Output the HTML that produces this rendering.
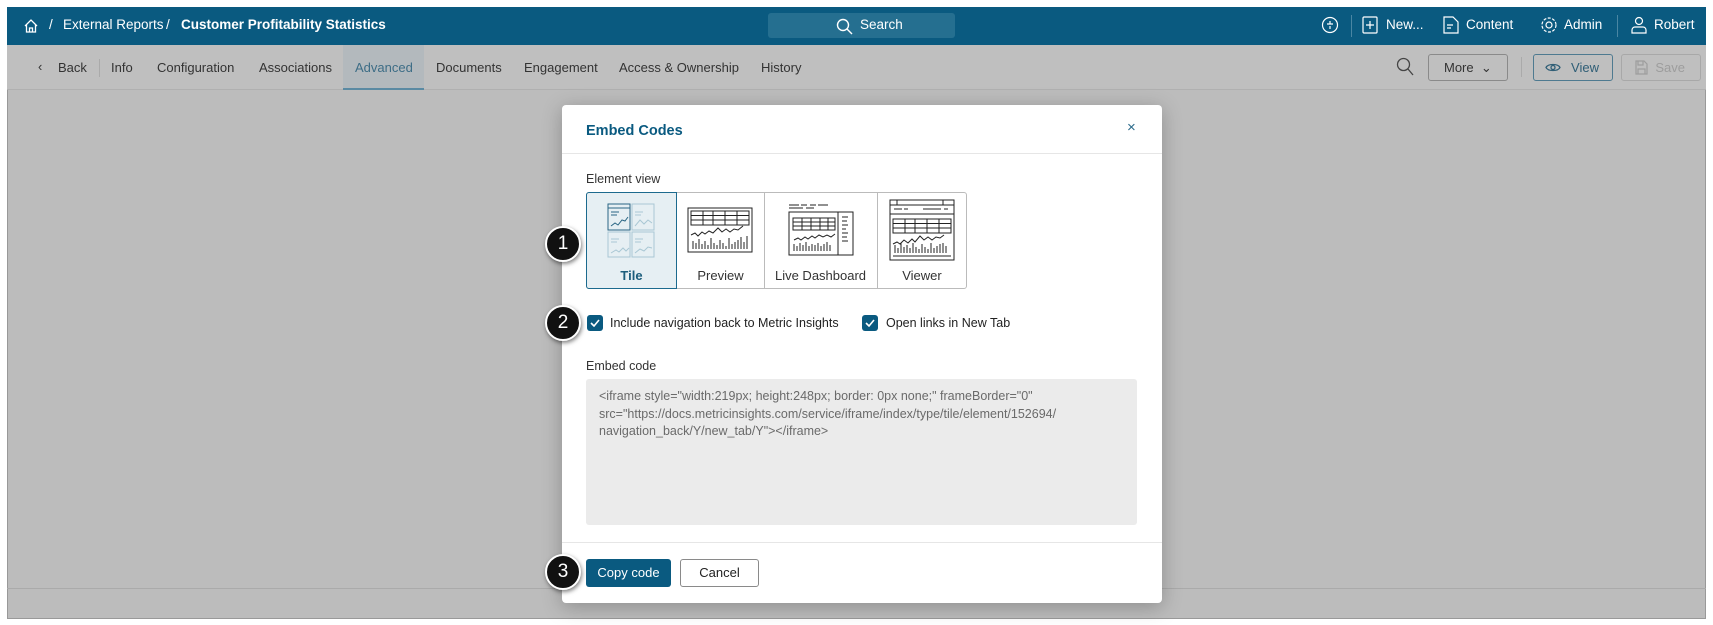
<!DOCTYPE html>
<html><head><meta charset="utf-8"><style>
*{box-sizing:border-box;margin:0;padding:0}
body{width:1713px;height:625px;background:#fff;font-family:"Liberation Sans",sans-serif;position:relative;overflow:hidden}
.abs{position:absolute}
.frame{left:7px;top:7px;width:1699px;height:612px;background:#bcbcbc;border:1px solid #999}
.top{left:7px;top:7px;width:1699px;height:38px;background:#0a5a80;color:#fff;font-size:13.5px}
.t{position:absolute;white-space:nowrap}
.sub{left:7px;top:45px;width:1699px;height:45px;background:#bfbfbf;border-bottom:1px solid #b0b0b0;font-size:13px;color:#333}
.modal{left:562px;top:105px;width:600px;height:498px;background:#fff;border-radius:4px;box-shadow:0 4px 20px rgba(0,0,0,.25)}
.badge{width:36px;height:36px;border-radius:50%;background:#111;border:2px solid #fff;color:#fff;font-size:19px;text-align:center;line-height:32px;box-shadow:1px 2px 4px rgba(0,0,0,.5)}
.cb{width:16px;height:16px;background:#0a5a80;border-radius:3px}
.btn{border:1px solid #8a8a8a;border-radius:3px;font-size:13px;text-align:center}
</style></head><body>
<div class="abs frame"></div>
<div class="abs top">
 <svg class="t" style="left:16px;top:11px" width="16" height="16" viewBox="0 0 16 16" fill="none" stroke="#fff" stroke-width="1.3"><path d="M2 8L8 2l6 6M3.5 6.5V14h9V6.5M6.5 14v-4h3v4"/></svg>
 <span class="t" style="left:42px;top:10px">/</span>
 <span class="t" style="left:56px;top:10px">External Reports</span>
 <span class="t" style="left:159px;top:10px">/</span>
 <span class="t" style="left:174px;top:10px;font-weight:bold">Customer Profitability Statistics</span>
 <div class="t" style="left:761px;top:6px;width:187px;height:25px;background:#256f90;border-radius:3px"></div>
 <svg class="t" style="left:829px;top:11px" width="17" height="17" viewBox="0 0 17 17" fill="none" stroke="#fff" stroke-width="1.4"><circle cx="7" cy="7" r="5.5"/><path d="M11 11l5 5"/></svg>
 <span class="t" style="left:853px;top:10px">Search</span>
 <svg class="t" style="left:1314px;top:9px" width="18" height="18" viewBox="0 0 18 18" fill="none" stroke="#fff" stroke-width="1.2"><circle cx="9" cy="9" r="7.5"/><path d="M9 5v3M9 10v3M6 8h6"/></svg>
 <div class="t" style="left:1344px;top:8px;width:1px;height:22px;background:#4a86a3"></div>
 <svg class="t" style="left:1355px;top:9px" width="16" height="18" viewBox="0 0 16 18" fill="none" stroke="#fff" stroke-width="1.2"><rect x="1" y="1" width="14" height="16" rx="1"/><path d="M8 5v8M4 9h8"/></svg>
 <span class="t" style="left:1379px;top:10px">New...</span>
 <svg class="t" style="left:1436px;top:9px" width="16" height="18" viewBox="0 0 16 18" fill="none" stroke="#fff" stroke-width="1.2"><path d="M1 1h9l5 5v11H1z M4 9h6M4 12h4"/></svg>
 <span class="t" style="left:1459px;top:10px">Content</span>
 <svg class="t" style="left:1533px;top:9px" width="18" height="18" viewBox="0 0 18 18" fill="none" stroke="#fff" stroke-width="1.2"><circle cx="9" cy="9" r="3"/><circle cx="9" cy="9" r="7" stroke-dasharray="3 1.5"/></svg>
 <span class="t" style="left:1557px;top:10px">Admin</span>
 <div class="t" style="left:1610px;top:8px;width:1px;height:22px;background:#4a86a3"></div>
 <svg class="t" style="left:1624px;top:9px" width="16" height="18" viewBox="0 0 16 18" fill="none" stroke="#fff" stroke-width="1.2"><circle cx="8" cy="5" r="3.5"/><path d="M1 17v-3a3 3 0 013-3h8a3 3 0 013 3v3z"/></svg>
 <span class="t" style="left:1647px;top:10px">Robert</span>
</div>
<div class="abs sub">
 <span class="t" style="left:31px;top:14px">&#8249;</span>
 <span class="t" style="left:51px;top:15px">Back</span>
 <div class="t" style="left:92px;top:14px;width:1px;height:18px;background:#aaa"></div>
 <span class="t" style="left:104px;top:15px">Info</span>
 <span class="t" style="left:150px;top:15px">Configuration</span>
 <span class="t" style="left:252px;top:15px">Associations</span>
 <div class="t" style="left:336px;top:0;width:81px;height:45px;background:#b3b9bd;border-bottom:2px solid #5a8aa3"></div>
 <span class="t" style="left:348px;top:15px;color:#3d6d86">Advanced</span>
 <span class="t" style="left:429px;top:15px">Documents</span>
 <span class="t" style="left:517px;top:15px">Engagement</span>
 <span class="t" style="left:612px;top:15px">Access &amp; Ownership</span>
 <span class="t" style="left:754px;top:15px">History</span>
 <svg class="t" style="left:1389px;top:12px" width="18" height="20" viewBox="0 0 18 20" fill="none" stroke="#444" stroke-width="1.3"><circle cx="7.5" cy="7.5" r="6"/><path d="M12 12l5 6"/></svg>
 <div class="t btn" style="left:1421px;top:9px;width:80px;height:27px;line-height:25px;text-align:left;padding-left:15px">More &nbsp;&#8964;</div>
 <div class="t" style="left:1514px;top:12px;width:1px;height:20px;background:#aaa"></div>
 <div class="t btn" style="left:1526px;top:9px;width:80px;height:27px;line-height:25px;border-color:#4e7a90;color:#2f5e76;text-align:right;padding-right:13px">View</div>
 <svg class="t" style="left:1538px;top:16px" width="16" height="13" viewBox="0 0 16 13" fill="none" stroke="#2f5e76" stroke-width="1.3"><path d="M1 6.5C3 2.5 13 2.5 15 6.5 13 10.5 3 10.5 1 6.5z"/><circle cx="8" cy="6.5" r="2"/></svg>
 <div class="t btn" style="left:1614px;top:9px;width:80px;height:27px;line-height:25px;border-color:#a8a8a8;color:#9d9d9d;text-align:right;padding-right:15px">Save</div>
 <svg class="t" style="left:1628px;top:15px" width="13" height="15" viewBox="0 0 13 15" fill="none" stroke="#9d9d9d" stroke-width="1.2"><path d="M1 1h8l3 3v10H1zM3 1v4h5V1M3 14V9h7v5"/></svg>
</div>
<div class="abs" style="left:7px;top:588px;width:1699px;height:1px;background:#aaa"></div>

<div class="abs modal">
 <div class="t" style="left:24px;top:18px;font-size:14.5px;font-weight:bold;color:#0a5a80">Embed Codes</div>
 <div class="t" style="left:565px;top:14px;font-size:15px;color:#2a6a8a">&#215;</div>
 <div class="t" style="left:0;top:48px;width:600px;height:1px;background:#e6e6e6"></div>
 <div class="t" style="left:24px;top:67px;font-size:12.5px;color:#333">Element view</div>
 <div class="t" style="left:24px;top:87px;width:381px;height:97px;border:1px solid #bbb;border-radius:3px"></div>
 <div class="t" style="left:24px;top:87px;width:91px;height:97px;border:1px solid #1c6a8e;background:#e6eff3;border-radius:3px 0 0 3px"></div>
 <div class="t" style="left:202px;top:88px;width:1px;height:95px;background:#bbb"></div>
 <div class="t" style="left:315px;top:88px;width:1px;height:95px;background:#bbb"></div>
 <div class="t" style="left:24px;top:163px;width:91px;text-align:center;font-size:13px;font-weight:bold;color:#1c5d7c">Tile</div>
 <div class="t" style="left:115px;top:163px;width:87px;text-align:center;font-size:13px;color:#333">Preview</div>
 <div class="t" style="left:202px;top:163px;width:113px;text-align:center;font-size:13px;color:#333">Live Dashboard</div>
 <div class="t" style="left:315px;top:163px;width:90px;text-align:center;font-size:13px;color:#333">Viewer</div>
 <svg class="t" style="left:45px;top:98px" width="48" height="55" viewBox="0 0 48 55" fill="none" stroke-width="1"><rect x="1" y="1" width="22" height="26" stroke="#2a6684"/><path d="M1 5h22M4 9h8M4 12h6M4 23l4-3 3 2 4-5 3 1 3-4" stroke="#2a6684"/><g stroke="#a9c7d4"><rect x="25" y="1" width="22" height="26"/><path d="M28 9h8M28 12h6M28 23l5-6 4 4 4-4 4 3"/><rect x="1" y="29" width="22" height="25"/><path d="M4 36h8M4 39h6M4 50l5-3 3 2 4-4 3 3 3-3"/><rect x="25" y="29" width="22" height="25"/><path d="M28 36h8M28 39h6M28 50l5-4 4 2 4-4 4 1"/></g></svg>
 <svg class="t" style="left:125px;top:102px" width="66" height="46" viewBox="0 0 66 46" fill="none" stroke="#222" stroke-width="1"><rect x="1" y="1" width="64" height="44"/><rect x="4" y="4" width="58" height="14"/><path d="M4 8.5h58M4 13h58M16 4v14M26 4v14M38 4v14M50 4v14M4 28l4-2 3 3 4-4 3 2 4-3 4 2 5-5 4 4 4-3 4 3 4-3 4 1 5-4M6 42V34M9 42v-6M12 42V32M15 42v-5M18 42v-8M21 42v-4M24 42V31M27 42v-6M30 42v-4M33 42V33M36 42v-6M39 42v-3M42 42V31M45 42v-5M48 42v-7M51 42v-9M54 42V30M57 42v-7M60 42V29"/></svg>
 <svg class="t" style="left:226px;top:99px" width="66" height="52" viewBox="0 0 66 52" fill="none" stroke="#222" stroke-width="1"><path d="M1 1h10M13 1h6M22 1h6M30 1h10M1 4h14M18 4h8"/><rect x="1" y="8" width="64" height="43"/><path d="M50 8v43M54 13h6M54 17h5M54 21h6M54 25h4M54 29h6M54 33h5M54 37h6"/><rect x="5" y="14" width="42" height="12"/><path d="M5 18h42M5 22h42M14 14v12M23 14v12M32 14v12M40 14v12M6 36l4-2 3 2 4-3 3 2 4-3 3 2 4-3 4 2 4-2 4 2 4-3M6 47v-7M9 47v-5M12 47v-8M15 47v-6M18 47v-9M21 47v-5M24 47v-7M27 47v-6M30 47v-8M33 47v-5M36 47v-7M39 47v-9M42 47v-6"/></svg>
 <svg class="t" style="left:327px;top:94px" width="66" height="62" viewBox="0 0 66 62" fill="none" stroke="#222" stroke-width="1"><rect x="1" y="1" width="64" height="60"/><path d="M1 6h64M8 1v5M54 1v5M1 15h64M5 10h8M15 10h4M34 10h18M38 10h2M55 10h4M4 57h58"/><rect x="4" y="20" width="58" height="14"/><path d="M4 24.5h58M4 29h58M16 20v14M26 20v14M38 20v14M50 20v14M4 45l4-2 3 2 4-4 4 3 4-4 3 3 5-6 4 4 4-3 4 3 4-3 4 1 4-3M6 54v-8M9 54v-5M12 54v-10M15 54v-6M18 54v-8M21 54v-5M24 54v-10M27 54v-6M30 54v-4M33 54v-9M36 54v-6M39 54v-4M42 54v-10M45 54v-5M48 54v-7M51 54v-9M54 54v-10M57 54v-7"/></svg>

 <div class="t cb" style="left:25px;top:210px"></div>
 <svg class="t" style="left:28px;top:214px" width="10" height="8" viewBox="0 0 10 8" fill="none" stroke="#fff" stroke-width="1.6"><path d="M1 4l3 3 5-6"/></svg>
 <div class="t" style="left:48px;top:211px;font-size:12.5px;color:#222">Include navigation back to Metric Insights</div>
 <div class="t cb" style="left:300px;top:210px"></div>
 <svg class="t" style="left:303px;top:214px" width="10" height="8" viewBox="0 0 10 8" fill="none" stroke="#fff" stroke-width="1.6"><path d="M1 4l3 3 5-6"/></svg>
 <div class="t" style="left:324px;top:211px;font-size:12.5px;color:#222">Open links in New Tab</div>

 <div class="t" style="left:24px;top:254px;font-size:12.5px;color:#333">Embed code</div>
 <div class="t" style="left:24px;top:274px;width:551px;height:146px;background:#ebebeb;border-radius:3px;padding:9px 13px;font-size:12.5px;line-height:17.5px;color:#6a6a6a">&lt;iframe style="width:219px; height:248px; border: 0px none;" frameBorder="0"<br>src="https://docs.metricinsights.com/service/iframe/index/type/tile/element/152694/<br>navigation_back/Y/new_tab/Y"&gt;&lt;/iframe&gt;</div>
 <div class="t" style="left:0;top:437px;width:600px;height:1px;background:#e6e6e6"></div>
 <div class="t" style="left:24px;top:454px;width:85px;height:28px;background:#0a5a80;border-radius:3px;color:#fff;font-size:13px;line-height:28px;text-align:center">Copy code</div>
 <div class="t btn" style="left:118px;top:454px;width:79px;height:28px;line-height:26px;color:#222">Cancel</div>
</div>
<div class="abs badge" style="left:545px;top:226px">1</div>
<div class="abs badge" style="left:545px;top:305px">2</div>
<div class="abs badge" style="left:545px;top:554px">3</div>
</body></html>
